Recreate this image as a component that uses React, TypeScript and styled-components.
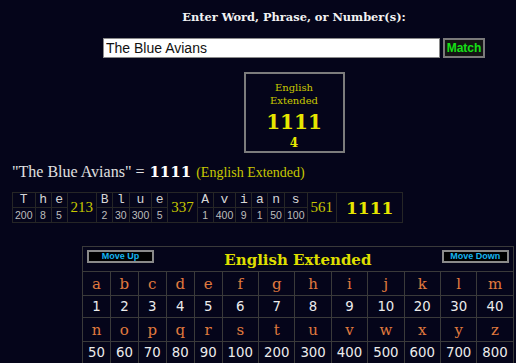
import React from "react";
import styled, { createGlobalStyle } from "styled-components";

const GlobalStyle = createGlobalStyle`
	html, body {
		margin: 0;
		padding: 0;
		background: #05051a;
		overflow: hidden;
	}
`;

const words = [
	{ letters: [["T", 200], ["h", 8], ["e", 5]], total: 213 },
	{ letters: [["B", 2], ["l", 30], ["u", 300], ["e", 5]], total: 337 },
	{
		letters: [["A", 1], ["v", 400], ["i", 9], ["a", 1], ["n", 50], ["s", 100]],
		total: 561
	}
] as { letters: [string, number][]; total: number }[];

const values = [
	1, 2, 3, 4, 5, 6, 7, 8, 9, 10, 20, 30, 40, 50, 60, 70, 80, 90, 100, 200, 300,
	400, 500, 600, 700, 800
];
const alphabet = "abcdefghijklmnopqrstuvwxyz".split("");

const Page = styled.div`
	width: 516px;
	height: 363px;
	background: #05051a;
	font-family: "DejaVu Serif", serif;
`;

const Centered = styled.div`
	margin-left: 72px;
	width: 444px;
	display: flex;
	flex-direction: column;
	align-items: center;
`;

const Heading = styled.div`
	padding-top: 10px;
	font-size: 11.4px;
	line-height: 14px;
	font-weight: bold;
	color: #f2f2f2;
`;

const SearchRow = styled.div`
	margin-top: 14px;
	display: flex;
	gap: 3px;
`;

const SearchInput = styled.input`
	box-sizing: border-box;
	width: 337px;
	height: 20px;
	margin: 0;
	padding: 0 2px;
	border: 1px solid #8a8a8a;
	background: #fff;
	font-family: "Liberation Sans", Arial, sans-serif;
	font-size: 14px;
	color: #111;
	outline: none;
`;

const MatchButton = styled.button`
	box-sizing: border-box;
	width: 42px;
	height: 20px;
	margin: 0;
	padding: 0;
	border: 2px solid #7a7a7a;
	background: #141414;
	color: #16e016;
	font-family: "Liberation Sans", Arial, sans-serif;
	font-weight: bold;
	font-size: 12px;
`;

const ResultBox = styled.div`
	box-sizing: border-box;
	margin-top: 14px;
	width: 101px;
	height: 81px;
	border: 2px solid #7c7c7c;
	display: flex;
	flex-direction: column;
	align-items: center;
	padding-top: 7px;
`;

const CipherName = styled.div`
	font-size: 10px;
	line-height: 13px;
	color: #c8c800;
	text-align: center;
`;

const BigValue = styled.div<{ size: number; gap: number }>`
	margin-top: ${(p) => p.gap}px;
	font-size: ${(p) => p.size}px;
	line-height: ${(p) => p.size + 2}px;
	font-weight: bold;
	color: #e6e600;
`;

const Summary = styled.div`
	margin: 10px 0 0 12px;
	display: flex;
	align-items: baseline;
	gap: 5px;
	height: 18px;
`;

const Phrase = styled.span`
	font-family: "Liberation Serif", "Times New Roman", serif;
	font-size: 16px;
	color: #e0e0e0;
`;

const SumValue = styled.span`
	font-size: 15px;
	font-weight: bold;
	color: #ffffff;
`;

const SumCipher = styled.span`
	font-family: "Liberation Serif", "Times New Roman", serif;
	font-size: 14px;
	color: #c8c800;
`;

const Breakdown = styled.table`
	margin: 11px 0 0 12px;
	border-collapse: collapse;
	border: 1px solid #262626;

	td {
		border: 1px solid #262626;
		padding: 0 2px;
		text-align: center;
	}
`;

const LetterCell = styled.td`
	min-width: 11px;
	font-family: "Liberation Mono", "Courier New", monospace;
	font-size: 13px;
	line-height: 14px;
	color: #d6d6d6;
`;

const NumCell = styled.td`
	min-width: 11px;
	font-family: "Liberation Sans", Arial, sans-serif;
	font-size: 10.5px;
	line-height: 14px;
	color: #bdbdbd;
`;

const WordTotal = styled.td`
	&& {
		padding: 0 3px;
	}
	font-family: "Liberation Serif", "Times New Roman", serif;
	font-size: 15px;
	color: #c8c800;
`;

const GrandTotal = styled.td`
	&& {
		padding: 0 9px;
	}
	font-size: 17px;
	font-weight: bold;
	color: #e6e600;
`;

const ChartWrap = styled.div`
	margin: 23px 0 0 82px;
`;

const Chart = styled.table`
	border-collapse: collapse;
	border: 1px solid #3a3a3a;

	td {
		border: 1px solid #3a3a3a;
		text-align: center;
		padding: 0 5px;
	}
`;

const ChartHeader = styled.td`
	&& {
		padding: 2px 4px 0 4px;
		height: 22px;
	}
`;

const HeaderBar = styled.div`
	display: flex;
	align-items: flex-start;
	justify-content: space-between;
`;

const MoveButton = styled.button`
	box-sizing: border-box;
	width: 67px;
	height: 13px;
	margin: 0;
	padding: 0;
	border: 2px solid #8a8a8a;
	background: #000;
	color: #16b4f0;
	font-family: "Liberation Sans", Arial, sans-serif;
	font-weight: bold;
	font-size: 9px;
	line-height: 9px;
`;

const ChartTitle = styled.div`
	font-size: 15px;
	line-height: 20px;
	font-weight: bold;
	color: #dede00;
`;

const ChartLetter = styled.td`
	font-size: 15px;
	height: 23px;
	color: #e07a3e;
`;

const ChartNumber = styled.td`
	font-family: "DejaVu Sans", Verdana, sans-serif;
	font-size: 13.3px;
	height: 21px;
	color: #ececec;
`;

export default function App() {
	const rows = [alphabet.slice(0, 13), alphabet.slice(13)];
	return (
		<Page>
			<GlobalStyle />
			<Centered>
				<Heading>Enter Word, Phrase, or Number(s):</Heading>
				<SearchRow>
					<SearchInput value="The Blue Avians" readOnly />
					<MatchButton>Match</MatchButton>
				</SearchRow>
				<ResultBox>
					<CipherName>
						English
						<br />
						Extended
					</CipherName>
					<BigValue size={20} gap={4}>
						1111
					</BigValue>
					<BigValue size={12} gap={3}>
						4
					</BigValue>
				</ResultBox>
			</Centered>

			<Summary>
				<Phrase>"The Blue Avians" =</Phrase>
				<SumValue>1111</SumValue>
				<SumCipher>(English Extended)</SumCipher>
			</Summary>

			<Breakdown>
				<tbody>
					<tr>
						{words.map((w, wi) => (
							<React.Fragment key={wi}>
								{w.letters.map(([l], li) => (
									<LetterCell key={li}>{l}</LetterCell>
								))}
								<WordTotal rowSpan={2}>{w.total}</WordTotal>
							</React.Fragment>
						))}
						<GrandTotal rowSpan={2}>1111</GrandTotal>
					</tr>
					<tr>
						{words.map((w, wi) =>
							w.letters.map(([, v], li) => (
								<NumCell key={`${wi}-${li}`}>{v}</NumCell>
							))
						)}
					</tr>
				</tbody>
			</Breakdown>

			<ChartWrap>
				<Chart>
					<tbody>
						<tr>
							<ChartHeader colSpan={13}>
								<HeaderBar>
									<MoveButton>Move Up</MoveButton>
									<ChartTitle>English Extended</ChartTitle>
									<MoveButton>Move Down</MoveButton>
								</HeaderBar>
							</ChartHeader>
						</tr>
						{rows.map((row, ri) => (
							<React.Fragment key={ri}>
								<tr>
									{row.map((l) => (
										<ChartLetter key={l}>{l}</ChartLetter>
									))}
								</tr>
								<tr>
									{row.map((l, i) => (
										<ChartNumber key={l}>{values[ri * 13 + i]}</ChartNumber>
									))}
								</tr>
							</React.Fragment>
						))}
					</tbody>
				</Chart>
			</ChartWrap>
		</Page>
	);
}
